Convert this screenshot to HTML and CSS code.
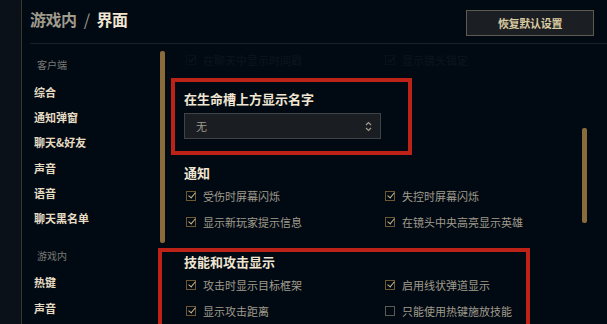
FILE: index.html
```html
<!DOCTYPE html>
<html lang="zh-CN">
<head>
    <meta charset="UTF-8">
    <meta name="viewport" content="width=device-width, initial-scale=1.0">
    <title>游戏内 / 界面</title>
    <link rel="stylesheet" href="styles.css">
</head>
<body>
    <div class="app">
        <div class="edge"></div>

        <div class="main">
            <header class="header">
                <h1 class="title"><span class="crumb">游戏内</span> <span class="sep">/</span> 界面</h1>
                <button class="reset">恢复默认设置</button>
            </header>

            <div class="body">
                <nav class="sidebar">
                    <div class="category">客户端</div>
                    <a class="item">综合</a>
                    <a class="item">通知弹窗</a>
                    <a class="item">聊天&amp;好友</a>
                    <a class="item">声音</a>
                    <a class="item">语音</a>
                    <a class="item">聊天黑名单</a>
                    <div class="category gap">游戏内</div>
                    <a class="item">热键</a>
                    <a class="item">声音</a>
                </nav>

                <div class="thumb"></div>

                <div class="content">
                    <div class="options faded">
                        <label class="option"><span class="box checked"></span>在聊天中显示时间戳</label>
                        <label class="option"><span class="box checked"></span>显示镜头锁定</label>
                    </div>

                    <section class="group first">
                        <h2>在生命槽上方显示名字</h2>
                        <div class="select">
                            <span>无</span>
                            <svg width="7" height="11" viewBox="0 0 7 11">
                                <path d="M1 4 L3.5 1.5 L6 4 M1 7 L3.5 9.5 L6 7" fill="none" stroke="#a09b8c" stroke-width="1.2"/>
                            </svg>
                        </div>
                    </section>

                    <section class="group">
                        <h2>通知</h2>
                        <div class="options">
                            <label class="option"><span class="box checked"></span>受伤时屏幕闪烁</label>
                            <label class="option"><span class="box checked"></span>失控时屏幕闪烁</label>
                            <label class="option"><span class="box checked"></span>显示新玩家提示信息</label>
                            <label class="option"><span class="box checked"></span>在镜头中央高亮显示英雄</label>
                        </div>
                    </section>

                    <section class="group">
                        <h2>技能和攻击显示</h2>
                        <div class="options">
                            <label class="option"><span class="box checked"></span>攻击时显示目标框架</label>
                            <label class="option"><span class="box checked"></span>启用线状弹道显示</label>
                            <label class="option"><span class="box checked"></span>显示攻击距离</label>
                            <label class="option"><span class="box"></span>只能使用热键施放技能</label>
                        </div>
                    </section>
                </div>

                <div class="scroll">
                    <div class="scroll-thumb"></div>
                </div>
            </div>
        </div>

        <!-- marcações em vermelho -->
        <div class="mark mark-name"></div>
        <div class="mark mark-skills"></div>
    </div>
</body>
</html>
```

FILE: styles.css
```css
* {
    margin: 0;
    padding: 0;
    box-sizing: border-box;
    font-family: "Noto Sans CJK SC", "Noto Sans", sans-serif;
}

body {
    background: #010a13;
    width: 607px;
    height: 324px;
    overflow: hidden;
}

.app {
    position: relative;
    display: flex;
    height: 324px;
}

.edge {
    width: 22px;
    background: #0a1119;
    border-right: 1px solid #3b3829;
}

.main {
    flex: 1;
    display: flex;
    flex-direction: column;
}

.header {
    display: flex;
    align-items: center;
    justify-content: space-between;
    height: 46px;
    margin-left: 8px;
    padding: 2px 13px 0 0;
    border-bottom: 1px solid #1b2027;
}

.title {
    font-size: 16px;
    font-weight: 700;
    color: #f0e6d2;
    margin-top: -7px;
    letter-spacing: -0.5px;
}

.crumb,
.sep {
    color: #a09b8c;
}

.sep {
    font-weight: 400;
    margin: 0 4px;
}

.reset {
    width: 128px;
    height: 26px;
    background: #1b1e23;
    border: 1px solid #5d5a50;
    color: #d9cba0;
    font-size: 11px;
    font-weight: 700;
    letter-spacing: -0.3px;
}

.body {
    flex: 1;
    display: flex;
}

.sidebar {
    width: 138px;
    padding: 12px 0 0 12px;
}

.category {
    height: 18px;
    line-height: 18px;
    padding-left: 3px;
    margin-bottom: 5.5px;
    font-size: 10px;
    color: #7a7a75;
}

.category.gap {
    margin-top: 15px;
}

.item {
    display: block;
    height: 25.4px;
    line-height: 25.4px;
    font-size: 11px;
    font-weight: 700;
    color: #e6dcc4;
}

.thumb {
    width: 5px;
    height: 192px;
    margin-top: 7px;
    border-radius: 2px;
    background: #8a6b3c;
}

.content {
    width: 398px;
    padding: 3px 0 0 19px;
}

.options {
    display: grid;
    grid-template-columns: 199px 199px;
}

.options.faded {
    opacity: 0.07;
}

.option {
    display: flex;
    align-items: center;
    height: 26px;
    padding-left: 2px;
    font-size: 11px;
    color: #a09b8c;
}

.box {
    position: relative;
    width: 10px;
    height: 10px;
    margin-right: 7px;
    border: 1px solid #5b5a55;
}

.box.checked {
    border-color: #6d5832;
}

.box.checked::after {
    content: "";
    position: absolute;
    left: 2.5px;
    top: -1px;
    width: 3px;
    height: 6px;
    border-right: 1.5px solid #cbb88e;
    border-bottom: 1.5px solid #cbb88e;
    transform: rotate(40deg);
}

.group h2 {
    height: 20px;
    line-height: 20px;
    font-size: 13px;
    font-weight: 700;
    color: #f0e6d2;
}

.group {
    margin-top: 17px;
}

.group.first {
    margin-top: 16px;
}

.group + .group {
    margin-top: 24px;
}

.group + .group + .group {
    margin-top: 17px;
}

.select {
    display: flex;
    align-items: center;
    justify-content: space-between;
    width: 197px;
    height: 26px;
    margin-top: 4px;
    padding: 0 8px 0 11px;
    background: #1a1e23;
    border: 1px solid #3f4246;
    font-size: 11px;
    color: #a09b8c;
}

.scroll {
    flex: 1;
    display: flex;
    justify-content: center;
    padding-right: 2px;
}

.scroll-thumb {
    width: 5px;
    height: 95px;
    margin-top: 84px;
    border-radius: 2px;
    background: #8a6b3c;
}

.mark {
    position: absolute;
    border: 4px solid #bd2219;
}

.mark-name {
    left: 171px;
    top: 78px;
    width: 241px;
    height: 77px;
}

.mark-skills {
    left: 158px;
    top: 248px;
    width: 372px;
    height: 90px;
}
```
